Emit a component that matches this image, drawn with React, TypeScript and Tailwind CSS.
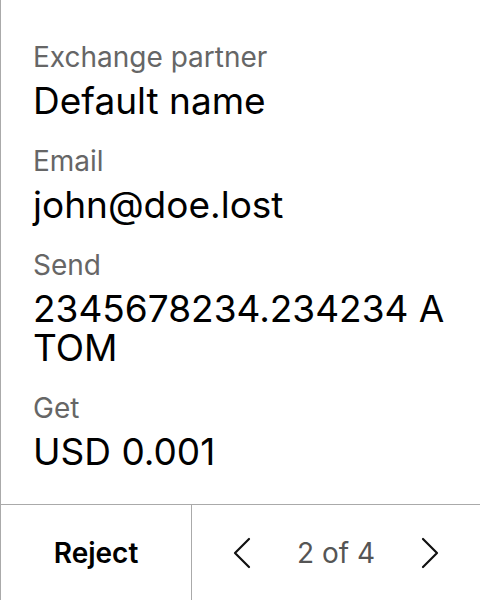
import { ReactNode } from 'react';

function Field({ label, children }: { label: string; children: ReactNode }) {
  return (
    <div className="flex flex-col gap-[8px]">
      <span className="text-[28px] leading-[32px] text-[#666666]">{label}</span>
      <span className="text-[37px] leading-[39px] text-black break-all">{children}</span>
    </div>
  );
}

function Chevron({ dir }: { dir: 'left' | 'right' }) {
  return (
    <svg width="18" height="32" viewBox="0 0 18 32" fill="none">
      <polyline
        points={dir === 'left' ? '16,2 2,16 16,30' : '2,2 16,16 2,30'}
        stroke="#111111"
        strokeWidth="2.2"
        strokeLinecap="round"
        strokeLinejoin="round"
      />
    </svg>
  );
}

export default function App() {
  return (
    <div
      className="h-screen w-full flex flex-col bg-white border-l border-[#aaaaaa]"
      style={{ fontFamily: 'Inter, "Liberation Sans", sans-serif' }}
    >
      <div className="flex-1 flex flex-col gap-[25px] pl-[32px] pr-[32px] pt-[41px]">
        <Field label="Exchange partner">Default name</Field>
        <Field label="Email">john@doe.lost</Field>
        <Field label="Send">2345678234.234234 ATOM</Field>
        <Field label="Get">USD 0.001</Field>
      </div>
      <div className="h-[96px] flex border-t border-[#aaaaaa]">
        <button className="w-[191px] flex items-center justify-center text-[28px] font-semibold text-black border-r border-[#aaaaaa]">
          Reject
        </button>
        <div className="flex-1 flex items-center justify-center gap-[46px]">
          <Chevron dir="left" />
          <span className="text-[28px] text-[#555555]">2 of 4</span>
          <Chevron dir="right" />
        </div>
      </div>
    </div>
  );
}
